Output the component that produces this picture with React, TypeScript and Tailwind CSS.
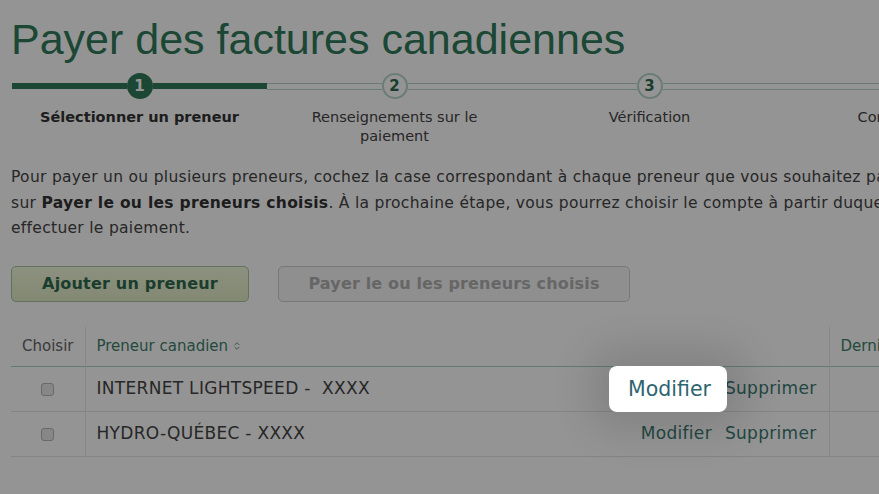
import { ChevronsUpDown } from 'lucide-react';

const steps = [
  { n: 1, label: 'Sélectionner un preneur', active: true },
  { n: 2, label: 'Renseignements sur le paiement', active: false },
  { n: 3, label: 'Vérification', active: false },
  { n: 4, label: 'Confirmation', active: false },
];

const payees = [
  { name: 'INTERNET LIGHTSPEED -  XXXX' },
  { name: 'HYDRO-QUÉBEC - XXXX' },
];

function Bar({ active }: { active: boolean }) {
  return active ? (
    <div className="flex-1 h-[6px] bg-[#2f7a5b]" />
  ) : (
    <div className="flex-1 h-[7px] bg-white border-y-[1.5px] border-[#b6d8ca]" />
  );
}

export default function App() {
  return (
    <div className="relative w-[879px] h-[494px] overflow-hidden bg-white font-['DejaVu_Sans',Verdana,sans-serif] text-[#444]">
      <div className="w-[1100px] pl-[11px]">
        {/* Titre */}
        <h1 className="pt-[18px] text-[43px] leading-none text-[#2f7a5b] font-['Liberation_Sans',Arial,sans-serif]">
          Payer des factures canadiennes
        </h1>

        {/* Étapes */}
        <div className="flex mt-[11px] -ml-[1px]">
          {steps.map((s) => (
            <div key={s.n} className="w-[255px] flex flex-col items-center first:ml-[2px]">
              <div className="w-full flex items-center h-[28px]">
                <Bar active={s.active} />
                {s.active ? (
                  <div className="w-[26px] h-[26px] rounded-full bg-[#2f7a5b] text-white text-[15px] font-bold flex items-center justify-center">
                    {s.n}
                  </div>
                ) : (
                  <div className="w-[26px] h-[26px] rounded-full bg-white border-2 border-[#b6d8ca] text-[#2f6a4f] text-[15px] font-bold flex items-center justify-center">
                    {s.n}
                  </div>
                )}
                <Bar active={s.active} />
              </div>
              <div
                className={`mt-[8px] w-[200px] text-center text-[14.5px] leading-[19px] ${
                  s.active ? 'font-bold text-[#333] w-[240px]' : 'text-[#444]'
                }`}
              >
                {s.label}
              </div>
            </div>
          ))}
        </div>

        {/* Instructions */}
        <div className="mt-[19px] text-[15.5px] tracking-[0.3px] leading-[25.5px] text-[#444]">
          <div className="whitespace-nowrap">
            Pour payer un ou plusieurs preneurs, cochez la case correspondant à chaque preneur que vous souhaitez payer, puis cliquez
          </div>
          <div className="whitespace-nowrap">
            sur <b className="text-[#333]">Payer le ou les preneurs choisis</b>. À la prochaine étape, vous pourrez choisir le compte à partir duquel vous voulez
          </div>
          <div className="whitespace-nowrap">effectuer le paiement.</div>
        </div>

        {/* Boutons */}
        <div className="flex gap-[29px] mt-[24px]">
          <button className="w-[238px] h-[36px] rounded-[5px] border border-[#a9c3a3] bg-gradient-to-b from-[#f2f9dc] to-[#e2ecc6] text-[16px] tracking-[0.2px] font-bold text-[#2f6a4f]">
            Ajouter un preneur
          </button>
          <button className="w-[352px] h-[36px] rounded-[5px] border border-[#cfcfcf] bg-[#f6f6f6] text-[16px] tracking-[0.15px] font-bold text-[#b0b0b0]">
            Payer le ou les preneurs choisis
          </button>
        </div>

        {/* Tableau */}
        <table className="mt-[25px] border-collapse">
          <thead>
            <tr className="h-[40px] border-b border-[#a8d5c4] text-[15px]">
              <th className="w-[74px] font-normal text-center text-[#666]">Choisir</th>
              <th className="w-[744px] border-l border-[#e6e6e6] font-normal text-left pl-[11px] text-[#3f7f6c]">
                <span className="inline-flex items-center gap-[4px]">
                  Preneur canadien
                  <ChevronsUpDown size={10} strokeWidth={2} />
                </span>
              </th>
              <th className="w-[250px] border-l border-[#e6e6e6] font-normal text-left pl-[11px] text-[#3f7f6c]">
                Dernier paiement
              </th>
            </tr>
          </thead>
          <tbody>
            {payees.map((p, i) => (
              <tr key={i} className="h-[45px] border-b border-[#e3e3e3] text-[17px] tracking-[0.3px]">
                <td className="text-center">
                  <span className="inline-block align-middle w-[13px] h-[13px] rounded-[3px] border border-[#b5b5b5] bg-[#e8e8e8]" />
                </td>
                <td className="border-l border-[#e6e6e6] pl-[11px] pr-[12px]">
                  <div className="flex items-center justify-between">
                    <span className="whitespace-pre text-[#444]">{p.name}</span>
                    <span className="flex gap-[13px] text-[#3d7a73]">
                      <span>Modifier</span>
                      <span>Supprimer</span>
                    </span>
                  </div>
                </td>
                <td className="border-l border-[#e6e6e6]" />
              </tr>
            ))}
          </tbody>
        </table>
      </div>

      {/* Voile */}
      <div className="absolute inset-0 z-10 bg-black/[0.42]" />

      {/* Mise en évidence */}
      <div className="absolute z-20 left-[609px] top-[366px] w-[118px] h-[46px] rounded-[8px] bg-white flex items-center justify-center pl-[3px] shadow-[0_0_40px_18px_rgba(0,0,0,0.12)]">
        <span className="text-[20.5px] text-[#2d6470]">Modifier</span>
      </div>
    </div>
  );
}
